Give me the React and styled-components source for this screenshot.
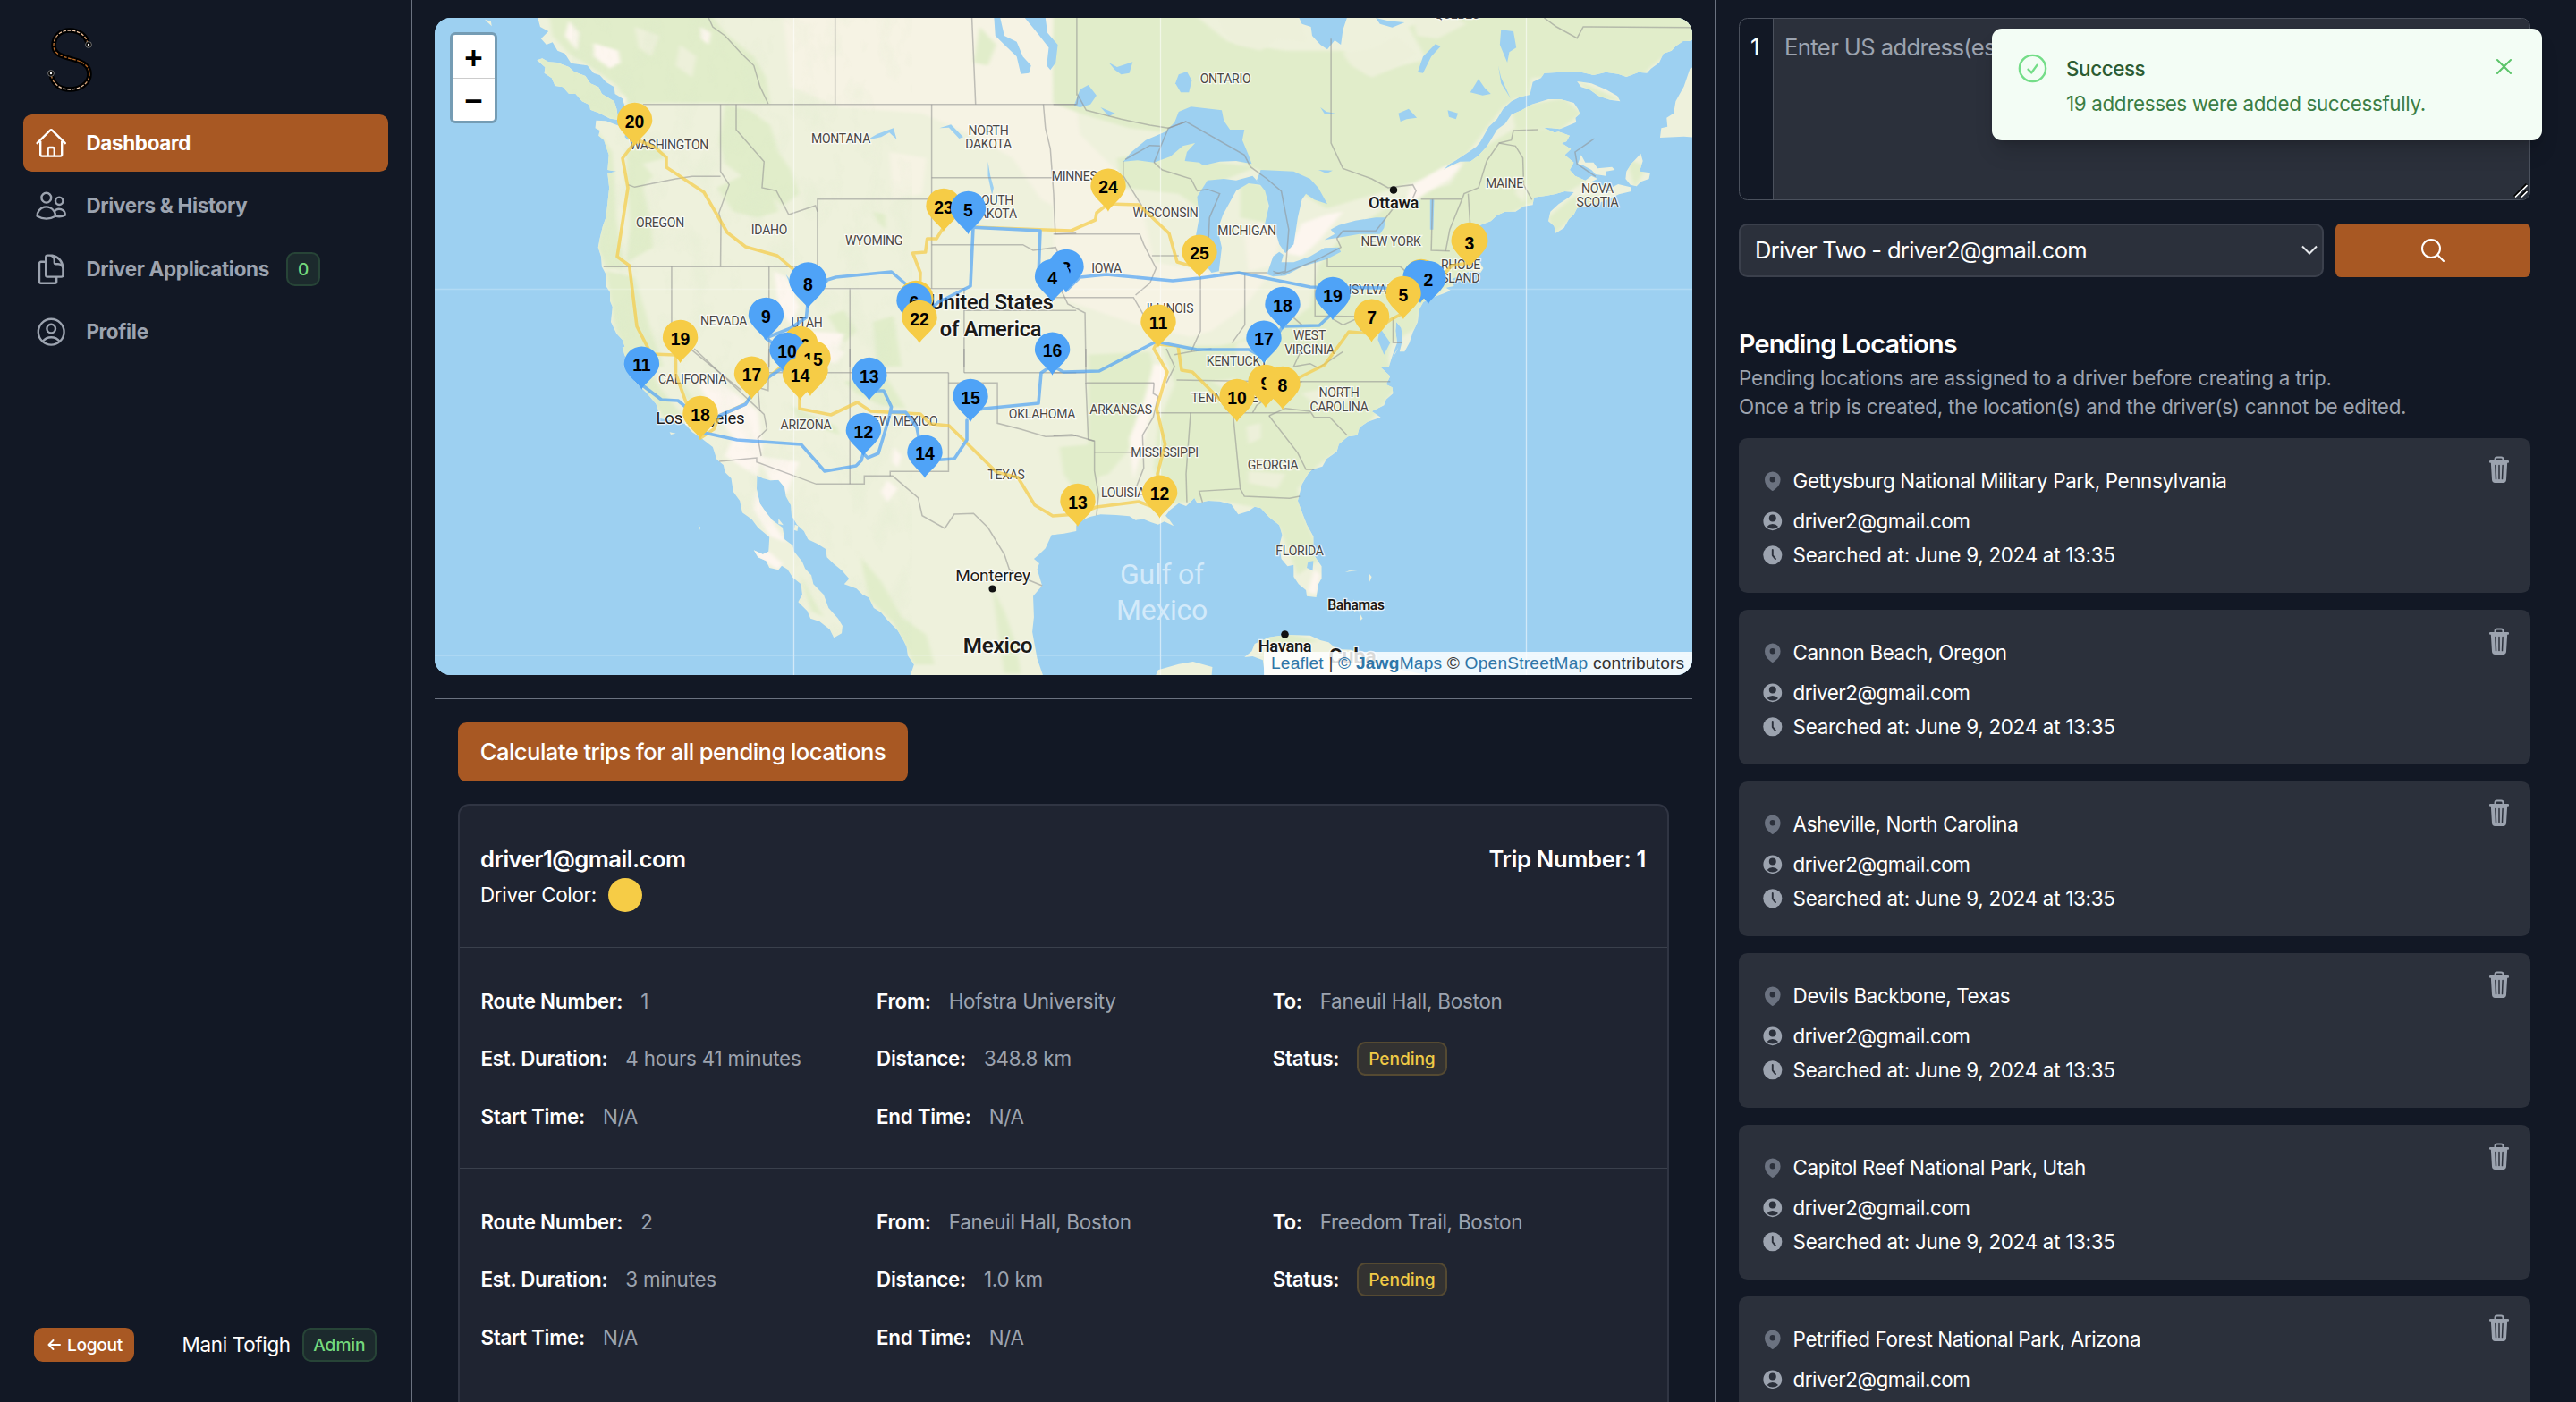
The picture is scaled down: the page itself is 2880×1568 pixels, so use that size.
import React from "react";
import styled, { createGlobalStyle } from "styled-components";
import {
  HiOutlineHome,
  HiOutlineUsers,
  HiOutlineDocumentDuplicate,
  HiOutlineUserCircle,
  HiOutlineCheckCircle,
  HiOutlineMagnifyingGlass,
  HiMapPin,
  HiUserCircle,
} from "react-icons/hi2";

const color = {
  page: "#121825",
  accent: "#a85823",
  line: "#6b7280",
  muted: "#9ca3af",
  panel: "#1f2431",
  card: "#2b303b",
  yellow: "#f6cc46",
  blue: "#4fa3f7",
};

const GlobalStyle = createGlobalStyle`
  *, *::before, *::after { box-sizing: border-box; }
  body {
    margin: 0;
    background: ${color.page};
    color: #fff;
    font-family: Inter, "Noto Sans", sans-serif;
    font-size: 22.4px;
    line-height: 32px;
    letter-spacing: -0.3px;
    overflow: hidden;
  }
`;

/* ---------- shell ---------- */

const Shell = styled.div`
  display: grid;
  grid-template-columns: 461px 1457px 1fr;
  height: 1568px;
  overflow: hidden;
  background: ${color.page};
`;

const Sidebar = styled.aside`
  display: flex;
  flex-direction: column;
  border-right: 1px solid ${color.line};
  padding: 26px;
`;

const LogoBox = styled.div`
  height: 102px;
  padding: 4px 0 0 24px;
`;

const Nav = styled.nav`
  display: flex;
  flex-direction: column;
  gap: 6.4px;
`;

const NavItem = styled.a`
  display: flex;
  align-items: center;
  height: 64px;
  padding: 0 12px;
  border-radius: 9.6px;
  font-weight: 650;
  letter-spacing: -0.3px;
  color: ${(p) => (p.$active ? "#fff" : color.muted)};
  background: ${(p) => (p.$active ? color.accent : "transparent")};

  svg {
    width: 38.4px;
    height: 38.4px;
    margin-right: 20px;
  }
`;

const tones = {
  green: { bg: "#1c2a2d", border: "#274437", text: "#74d97d" },
  yellow: { bg: "#333231", border: "#554a32", text: "#f0ca46" },
};

const Badge = styled.span`
  display: inline-flex;
  align-items: center;
  justify-content: center;
  height: 38px;
  min-width: 38px;
  padding: 0 ${(p) => p.$pad ?? 11}px;
  border: 2px solid ${(p) => tones[p.$tone].border};
  border-radius: 9.6px;
  background: ${(p) => tones[p.$tone].bg};
  color: ${(p) => tones[p.$tone].text};
  font-size: 19.2px;
  font-weight: 550;
  letter-spacing: -0.1px;
`;

const CountBadge = styled(Badge)`
  margin-left: 19px;
`;

const SidebarFoot = styled.div`
  display: flex;
  align-items: center;
  justify-content: space-between;
  margin-top: auto;
  padding: 0 13px 19px 12px;
`;

const Logout = styled.button`
  display: flex;
  align-items: center;
  gap: 7px;
  width: 112px;
  height: 38px;
  padding: 0 0 0 15px;
  border: 0;
  border-radius: 9.6px;
  background: ${color.accent};
  color: #fff;
  font: 550 19.2px Inter, sans-serif;
  letter-spacing: -0.35px;
`;

const Account = styled.div`
  display: flex;
  align-items: center;
  gap: 13px;
`;

/* ---------- centre column ---------- */

const Center = styled.main`
  display: flex;
  flex-direction: column;
  padding: 20px 25px 0 25px;
  border-right: 1px solid ${color.line};
  overflow: hidden;
`;

const MapFrame = styled.section`
  position: relative;
  flex: none;
  height: 735px;
  border-radius: 18px;
  overflow: hidden;
  background: #9dd0f1;

  > svg {
    display: block;
  }
`;

const ZoomControl = styled.div`
  position: absolute;
  left: 17px;
  top: 16px;
  width: 53px;
  height: 102px;
  display: flex;
  flex-direction: column;
  border: 3px solid rgba(0, 0, 0, 0.25);
  border-radius: 6px;
  background: #fff;
  background-clip: padding-box;
`;

const ZoomButton = styled.button`
  flex: 1;
  display: flex;
  align-items: center;
  justify-content: center;
  padding: 4px 0 0;
  border: 0;
  border-bottom: ${(p) => (p.$divided ? "1px solid #ccc" : "0")};
  background: transparent;
  color: #000;
  font: bold 35px "Liberation Sans", Arial, sans-serif;
`;

const Attribution = styled.div`
  position: absolute;
  right: 0;
  bottom: 0;
  height: 26px;
  width: 479px;
  padding: 0 8px;
  background: rgba(255, 255, 255, 0.84);
  color: #333;
  font: 19.2px/26px "Liberation Sans", Arial, sans-serif;
  letter-spacing: 0.18px;
  white-space: nowrap;

  a {
    color: #2f76a8;
  }
`;

const Trips = styled.section`
  flex: none;
  margin-top: 26px;
  padding: 26px 26px 0;
  border-top: 1px solid ${color.line};
`;

const CalculateButton = styled.button`
  display: block;
  width: 503px;
  height: 66px;
  padding: 0 0 2px;
  border: 0;
  border-radius: 9.6px;
  background: ${color.accent};
  color: #fff;
  font: 450 25.6px Inter, sans-serif;
  letter-spacing: -0.56px;
`;

const TripCard = styled.article`
  margin-top: 25px;
  width: 1354px;
  border: 2px solid #303543;
  border-bottom: 0;
  border-radius: 12.8px 12.8px 0 0;
  background: ${color.panel};
`;

const TripHead = styled.header`
  display: flex;
  justify-content: space-between;
  height: 158px;
  padding: 41px 24px 0 23px;
`;

const TripTitle = styled.h3`
  margin: 0;
  font-size: 25.6px;
  line-height: 38px;
  font-weight: 640;
  letter-spacing: ${(p) => p.$track ?? -0.5}px;
`;

const DriverColor = styled.div`
  display: flex;
  align-items: center;
  gap: 13px;
  height: 42px;
`;

const Dot = styled.span`
  width: 38.4px;
  height: 38.4px;
  border-radius: 50%;
  background: ${color.yellow};
`;

const Leg = styled.div`
  display: grid;
  grid-template-columns: repeat(3, 442.6px);
  grid-template-rows: 45px 43px 47px;
  row-gap: 20px;
  align-items: center;
  height: 246.8px;
  padding: 37.5px 0 0 23.5px;
  border-top: 1px solid #3a404c;
`;

const Field = styled.div`
  display: flex;
  align-items: center;
  gap: 20px;
`;

const Label = styled.span`
  font-weight: 570;
  letter-spacing: -0.28px;
`;

const Value = styled.span`
  color: ${color.muted};
  letter-spacing: -0.22px;
`;

/* ---------- right column ---------- */

const Side = styled.section`
  padding: 20px 51px 0 26px;
  overflow: hidden;
`;

const Editor = styled.div`
  position: relative;
  display: flex;
  height: 204px;
  border: 1px solid #4b515d;
  border-radius: 9.6px;
  overflow: hidden;
  font-size: 25.6px;
  line-height: 38px;
  letter-spacing: -0.6px;
`;

const Gutter = styled.div`
  width: 38px;
  padding: 13px 0 0 12px;
  border-right: 1px solid #4b515d;
`;

const EditorBody = styled.div`
  flex: 1;
  padding: 13px 12px 0;
  background: ${color.card};
  color: ${color.muted};
`;

const Grip = styled.svg`
  position: absolute;
  right: 2px;
  bottom: 2px;
`;

const Controls = styled.div`
  display: grid;
  grid-template-columns: 654px 218px;
  gap: 13px;
  margin-top: 26px;
  padding-bottom: 25px;
  border-bottom: 1px solid ${color.line};
`;

const Select = styled.div`
  display: flex;
  align-items: center;
  justify-content: space-between;
  height: 60px;
  padding: 0 5px 0 16px;
  border: 2px solid #3b404c;
  border-radius: 9.6px;
  background: ${color.card};
  font-size: 25.6px;
  font-weight: 430;
  letter-spacing: -0.72px;
`;

const SearchButton = styled.button`
  display: flex;
  align-items: center;
  justify-content: center;
  height: 60px;
  padding: 0;
  border: 0;
  border-radius: 6.4px;
  background: ${color.accent};
  color: #fff;
`;

const Heading = styled.h2`
  margin: 29px 0 0;
  font-size: 28.8px;
  line-height: 40px;
  font-weight: 640;
  letter-spacing: -0.8px;
`;

const Hint = styled.p`
  margin: 2px 0 19px;
  color: ${color.muted};
  letter-spacing: -0.24px;
`;

const List = styled.div`
  display: flex;
  flex-direction: column;
  gap: 19px;
`;

const LocationCard = styled.article`
  display: flex;
  justify-content: space-between;
  height: 173px;
  padding: 29.5px 24px 0 25px;
  border-radius: 9.6px;
  background: ${color.card};
`;

const Meta = styled.div`
  display: flex;
  align-items: center;
  gap: 10px;
  height: ${(p) => (p.$first ? 36 : 38.4)}px;
  margin-bottom: ${(p) => (p.$first ? 8 : 0)}px;
  color: #fff;
  font-weight: 440;
  letter-spacing: ${(p) => p.$track ?? -0.36}px;

  svg {
    flex: none;
    width: 25.6px;
    height: 25.6px;
    color: ${(p) => (p.$first ? "#6b7280" : "#9ca3af")};
  }
`;

const TrashIcon = styled.svg`
  margin-top: -10px;
`;

/* ---------- toast ---------- */

const Toast = styled.div`
  position: absolute;
  left: 2227px;
  top: 32px;
  width: 615px;
  height: 125px;
  display: flex;
  padding: 25px 29px 0 26px;
  border-radius: 11px;
  background: #f3fdf5;
  box-shadow: 0 16px 24px -5px rgba(0, 0, 0, 0.16), 0 6px 10px -6px rgba(0, 0, 0, 0.2);
`;

const ToastText = styled.div`
  flex: 1;
  margin: 4px 0 0 18px;
  display: flex;
  flex-direction: column;
  gap: 7px;
`;

const ToastTitle = styled.strong`
  font-weight: 550;
  color: #2c5c33;
  letter-spacing: -0.4px;
`;

const ToastMessage = styled.span`
  color: #3b7d44;
  letter-spacing: -0.34px;
`;

/* ---------- map data ---------- */

// The land is drawn in four quadrants, each with its own grid.
const quadrants = {
  nw: "translate(480 10) scale(.4592 .33333)",
  ne: "translate(1180 10) scale(.4592 .33333)",
  sw: "translate(480 390) scale(.4592 .33333)",
  se: "translate(1180 390) scale(.4592 .33333)",
};

const land = {
  nw: [
    "262,20 270,60 290,75 272,100 285,120 300,112 312,140 330,150 345,182 385,190 400,215 415,222 430,245 450,262 452,285 470,300 478,335 490,390 484,440 476,430 478,400 462,392 430,376 406,374 404,400 415,408 412,425 425,440 437,490 434,540 455,545 434,552 438,600 434,650 430,700 422,730 415,770 411,800 418,830 420,865 430,890 430,930 440,950 440,980 446,1000 442,1050 456,1090 470,1110 480,1150 474,1200 1575,1200 1575,20",
    "262,172 275,166 290,178 312,180 340,195 352,210 380,225 392,250 412,262 420,285 450,310 456,335 460,372 440,368 415,350 392,338 390,322 372,310 356,285 340,285 325,262 306,258 298,232 280,215 282,196",
    "135,35 150,42 152,58 142,45",
  ],
  ne: [
    "-5,20 1310,20 1560,20 1560,95 1545,108 1528,108 1510,125 1500,140 1480,150 1470,180 1450,200 1440,215 1420,212 1390,228 1370,218 1340,212 1310,222 1280,212 1230,212 1190,215 1182,232 1162,245 1155,288 1132,295 1110,310 1090,335 1075,370 1055,395 1045,420 1035,445 1025,462 1000,485 975,508 960,520 944,540 965,525 985,512 1010,512 1030,492 1050,462 1062,435 1075,405 1095,385 1110,355 1135,340 1160,320 1200,303 1230,303 1262,315 1272,335 1277,352 1266,365 1268,380 1242,395 1228,403 1208,400 1188,398 1215,415 1225,412 1252,425 1244,445 1232,450 1255,470 1240,490 1262,515 1252,540 1265,560 1290,575 1305,560 1320,570 1305,580 1330,590 1345,605 1370,588 1400,598 1402,612 1372,622 1345,640 1320,652 1295,660 1270,668 1262,690 1250,705 1238,735 1218,752 1214,728 1200,712 1205,680 1225,655 1250,632 1262,615 1240,612 1215,622 1190,628 1165,632 1162,658 1140,662 1120,680 1095,680 1075,692 1060,712 1040,722 1018,735 1002,752 1000,790 1010,830 1030,845 1042,870 1035,885 1012,880 1000,885 985,895 965,905 970,930 950,935 962,945 945,955 905,975 895,985 885,1010 882,1050 870,1085 862,1120 850,1150 838,1150 845,1110 842,1070 830,1050 828,1080 832,1120 820,1165 812,1200 -5,1200",
    "1270,243 1305,250 1340,270 1368,292 1375,310 1350,305 1322,292 1300,270 1280,262",
    "1400,590 1388,570 1390,545 1402,520 1425,485 1430,510 1422,545 1448,550 1445,570 1425,580 1415,595",
    "1280,490 1290,515 1310,515 1320,535 1355,530 1362,540 1340,545 1340,560 1315,555 1305,540 1285,525 1272,520",
    "1472,432 1475,400 1490,395 1488,365 1505,350 1510,310 1530,260 1545,200 1560,190 1560,432 1530,428",
  ],
  sw: [
    "470,-5 475,20 490,60 500,110 530,150 552,185 558,210 556,232 590,242 622,252 640,280 662,300 690,330 700,372 716,390 720,415 735,435 740,480 756,510 762,550 785,572 800,600 828,632 826,680 812,690 790,676 800,700 820,712 828,735 850,742 858,728 872,740 885,768 905,790 908,825 898,850 920,880 928,905 950,915 975,942 985,970 1004,955 1006,930 995,905 972,870 960,825 935,790 930,760 915,738 908,715 888,680 885,660 865,640 860,600 835,575 820,550 805,520 797,470 798,425 812,435 830,442 850,440 865,465 868,495 880,525 882,560 895,590 912,612 922,640 945,655 965,672 968,700 985,722 1005,745 1022,772 1010,790 1040,805 1055,825 1070,835 1082,870 1100,885 1115,910 1140,945 1155,980 1162,1000 1165,1030 1180,1060 1170,1100 1495,1100 1480,1040 1468,950 1472,900 1470,830 1492,795 1480,740 1485,720 1472,705 1485,690 1500,670 1515,625 1545,620 1575,612 1575,-5",
    "850,570 862,592 850,588",
    "890,590 898,595 896,612 888,608",
    "655,592 660,600 658,608",
    "585,280 600,284 588,288",
  ],
  se: [
    "-5,-5 -5,625 20,615 45,600 60,580 82,565 110,556 148,558 180,562 195,575 215,572 232,582 250,590 265,580 288,595 278,575 268,560 278,542 300,518 318,528 330,512 338,500 345,518 372,510 400,512 428,522 445,556 470,545 485,530 500,535 520,565 545,592 552,625 545,660 550,705 565,730 580,725 580,765 592,790 610,810 612,830 635,834 640,790 648,770 648,730 628,690 628,630 612,590 602,555 590,510 600,455 615,420 625,405 650,395 660,370 685,345 690,320 712,295 735,290 740,265 760,245 792,230 770,210 800,190 805,170 822,150 820,130 805,120 815,92 790,60 800,30 812,-5",
    "820,30 835,-5 828,15",
    "460,1035 478,1015 485,990 520,968 560,960 620,962 645,978 665,985 685,1008 720,1010 740,1030 775,1045 800,1060 850,1080 905,1095 510,1100 505,1045 480,1032",
    "243,1100 250,1078 300,1058 335,1050 382,1068 380,1100",
    "705,750 715,745 735,745 715,748",
    "762,752 770,765 765,782",
    "740,885 748,905 742,912",
    "725,840 735,870 728,885",
  ],
};

const woods = {
  nw: [
    "290,10 420,10 560,20 680,10 720,80 790,160 820,230 830,320 700,315 560,315 475,318 460,260 400,200 340,150 300,90",
    "262,160 360,195 460,310 465,380 380,340 290,240",
    "405,400 445,480 450,560 455,700 475,870 430,870 410,800 430,650 432,520",
    "480,470 560,460 575,500 520,520 545,560 520,600 540,720 545,800 480,850 490,720 480,580",
    "720,320 780,340 830,390 850,480 880,540 900,620 860,660 810,600 760,560 720,520 705,440",
    "1080,680 1110,690 1112,740 1095,720",
    "700,600 760,560 830,600 850,680 800,700 740,680",
    "1530,10 1575,10 1575,330 1528,300 1520,140",
    "430,880 500,900 540,1080 570,1200 480,1200 450,1050",
    "970,1030 1010,1010 1040,1080 1010,1120",
    "1080,1050 1130,1030 1150,1200 1090,1200",
    "1340,60 1380,120 1360,190 1325,180",
  ],
  ne: [
    "-5,10 330,10 420,110 560,140 700,140 760,220 900,170 1130,210 1140,280 1090,330 1050,400 1000,490 900,570 850,590 780,620 660,670 600,620 480,530 300,420 180,400 60,350 -5,315",
    "860,60 960,10 1570,10 1570,90 1480,160 1420,230 1160,230 1150,300 1000,290 900,160",
    "150,500 250,480 340,440 370,510 490,530 400,580 370,690 300,620 160,600",
    "1000,500 1120,400 1260,410 1260,500 1290,580 1240,620 1160,650 1070,710 1010,740 1000,790 1040,850 1000,890 950,940 890,1000 880,1070 820,1120 800,1210 330,1210 360,1150 480,1100 560,1060 620,1000 640,860 700,760 860,620 960,590",
    "1110,330 1240,300 1280,350 1230,405 1120,400",
    "450,570 520,600 520,720 450,700",
    "1260,630 1350,630 1250,710 1215,755 1200,700",
    "1270,240 1375,305 1320,300",
    "1390,500 1440,530 1410,600",
  ],
  sw: [
    "480,-10 520,30 560,130 620,230 570,230 520,130",
    "590,20 620,120 660,210 620,160",
    "1010,110 1110,90 1160,200 1100,190 1040,150",
    "1050,700 1100,780 1150,900 1210,960 1230,1060 1180,1060 1130,920 1070,840",
    "1370,800 1400,880 1430,1000 1440,1090 1400,1090 1385,950",
    "880,190 990,260 1000,290 900,240",
    "900,750 930,830 960,900 930,880",
  ],
  se: [
    "80,20 230,10 250,130 200,220 190,320 130,420 80,440 80,200",
    "260,-10 800,-10 830,130 740,290 640,390 590,470 605,560 650,700 590,760 545,600 480,530 400,510 270,520 240,400 250,250 290,120",
    "10,330 90,320 110,500 60,500 20,420",
    "480,975 565,955 640,980 560,1000",
  ],
};

const meadow = {
  ne: ["390,10 590,10 610,110 540,100 500,140 440,120 410,80", "700,150 780,130 830,90 880,150 820,200 770,230 720,190", "870,30 950,15 1000,50 930,100 880,90", "1120,560 1150,600 1140,650 1120,620", "440,1120 520,1090 500,1150 440,1170"],
  se: ["465,260 500,250 500,300 470,320", "380,110 440,100 420,140", "600,150 690,120 720,170 650,210", "470,410 560,420 540,470 470,450"],
  nw: ["500,60 560,90 540,160 510,130", "610,120 650,160 640,230 600,190"],
};

const pale = {
  nw: ["840,880 870,900 900,1000 880,1060 850,1000", "340,40 365,80 360,140 330,90", "400,115 460,140 465,180 440,200 400,160", "660,60 685,80 680,120 662,100", "900,1080 1010,1090 990,1170 920,1180", "465,280 480,300 478,325 468,310"],
  ne: ["850,640 870,590 945,530 990,520 960,570 900,620 880,640", "560,820 600,720 660,690 700,680 640,780 600,830"],
  sw: ["640,80 700,100 800,210 810,330 800,430 720,360 740,300 680,180", "800,360 900,380 880,450 870,490 830,440", "1115,440 1140,470 1115,515 1100,480", "800,650 860,720 850,742 800,700 790,680", "795,470 840,590 870,650 830,630 790,540", "1130,330 1150,360 1140,400 1128,380", "960,-10 1010,10 990,50 950,30"],
  se: ["240,50 270,60 270,120 230,230 190,440 180,300 210,200", "630,740 645,760 635,825 615,815"],
};

const prairie = {
  nw: ["860,10 1530,10 1520,320 1575,340 1575,700 1490,640 1420,500 1330,430 1200,350 1000,330 880,260", "1120,480 1210,500 1200,620 1130,640"],
  ne: ["-5,330 50,340 60,420 140,530 210,660 240,850 400,890 520,890 460,1000 380,1080 330,1100 200,1060 30,980 -5,900", "460,760 500,710 550,760 530,860 470,880"],
};

const water = {
  nw: [
    "1375,30 1390,30 1400,90 1430,110 1445,160 1465,190 1460,215 1440,218 1430,160 1400,120 1378,90",
    "1450,30 1500,30 1505,80 1530,120 1525,180 1512,205 1503,190 1508,130 1480,80",
    "868,890 885,920 895,945 880,930",
    "1065,440 1090,420 1130,400 1138,438 1120,415 1100,430",
    "1242,400 1270,388 1300,430 1290,435 1265,398",
    "1360,512 1366,560 1374,600 1370,625 1360,560",
  ],
  ne: [
    "590,20 712,20 700,70 695,120 680,105 662,136 645,120 625,90 622,60 600,50",
    "165,512 185,480 220,440 268,412 290,380 300,345 330,328 405,340 410,375 425,405 460,405 455,440 470,490 478,520 440,510 400,512 360,525 350,515 315,510 320,480 340,450 310,460 280,495 240,515 200,508",
    "370,575 345,630 350,700 342,760 350,830 380,885 398,880 405,800 395,740 408,690 440,610 470,585 500,590 480,560 440,575 410,570",
    "500,540 580,545 620,570 640,600 662,655 630,640 610,620 600,640 590,700 580,790 560,820 545,790 530,720 510,720 520,660 510,610 490,575",
    "515,890 530,830 545,815 555,825 550,850 580,850 620,830 655,802 690,800 695,815 660,840 600,865 560,895 530,898",
    "655,775 680,755 670,740 690,725 730,710 780,700 805,700 800,735 790,755 740,755 700,765",
    "300,220 320,210 332,240 325,280 305,280 292,250",
    "60,270 80,255 100,290 85,320 60,330 45,325",
    "130,180 150,195 188,178 180,215 160,220 145,205",
    "925,118 938,125 915,160 895,215 882,212 895,160",
    "1085,70 1115,75 1122,130 1105,145 1100,180 1082,120",
    "835,350 860,335 880,365 855,370 840,378",
    "955,340 980,350 975,370 958,362",
    "780,30 810,40 850,45 820,62 790,50",
    "1030,235 1045,265 1060,285 1040,290 1010,280",
    "640,540 675,542 660,552",
    "645,330 660,345 682,350 655,352",
    "1078,190 1085,230 1108,300 1085,250",
    "912,640 922,640 920,740 912,740",
    "110,330 145,350 130,360",
    "800,1090 790,1070 785,1110 800,1160 815,1120",
  ],
  se: ["615,715 628,712 626,745 612,735"],
};

const borders = {
  nw: [
    "520,320 1575,320", "680,30 690,60 720,90 760,150 790,190 805,260 825,318", "988,30 988,320", "1321,30 1330,320",
    "709,320 709,545 730,590 705,685 710,710 709,865", "747,320 747,405 815,512 810,600 845,610 875,690 940,660 945,680",
    "945,865 945,638 1223,638", "1223,320 1223,938", "1223,566 1517,566", "1495,320 1500,400 1512,470 1520,620 1524,755",
    "1223,791 1445,791 1470,810 1525,800 1545,870", "424,865 945,865", "945,865 945,938", "590,865 590,1090 760,1280", "827,865 827,1200",
    "915,938 1223,938", "1024,938 1024,1200", "1302,1012 1302,1200", "1302,1012 1575,1012", "1223,938 1302,938 1302,1012",
    "484,590 500,598 545,585 600,570 640,562 709,562", "1524,755 1575,752",
  ],
  ne: [
    "52,30 52,290", "-5,320 52,320 55,290 75,340 160,370 230,390 275,400 318,378 460,490 475,530 515,570 550,612 568,740 560,880 530,890",
    "318,378 275,400 240,515", "170,505 230,458 255,460", "671,100 671,450 700,535 770,570 810,600 870,590 878,610 870,635",
    "890,638 990,638 995,620 1030,600 1050,510 1080,450 1120,460 1138,500 1140,590 1160,640", "1080,450 1110,440 1115,408 1175,405",
    "1005,620 1010,730", "918,638 915,810 960,812", "990,638 960,740 950,812", "822,670 780,745 700,745 685,770 695,800 632,845 550,890 530,880",
    "632,845 632,1030 740,1032", "662,835 662,865 840,865 860,890", "165,510 165,560 210,660", "240,515 260,540 330,570 345,610 370,605 400,620 375,700 370,860",
    "-5,755 205,755 215,790 245,870 230,920 195,960", "235,828 300,828", "-5,968 190,968 220,1040 260,1110", "353,900 353,1080 330,1150",
    "461,890 461,1060 430,1120", "400,885 515,885", "1190,30 1220,60 1270,98 1285,60 1560,62", "1312,435 1265,480 1270,520 1315,562",
    "675,1040 700,1060 740,1035 745,1080", "822,1032 822,1120 845,1120", "550,1000 600,1060", "-5,900 20,960 30,990 72,1020 74,1200",
  ],
  sw: [
    "645,0 815,220 822,270 800,300 808,360", "706,378 797,366 797,380 942,454 1059,454 1059,427 1128,427 1190,500 1200,560 1255,603 1278,555 1325,553 1360,600 1400,690 1412,740",
    "827,0 825,140 800,130 805,210", "827,80 1264,80", "1024,0 1024,454", "1264,80 1264,412 1122,412 1122,427", "1302,0 1302,80", "1264,115 1383,115 1383,250 1440,270 1500,295 1575,292",
    "1412,740 1440,765 1492,795", "1302,80 1575,80",
  ],
  se: [
    "-5,80 72,80", "74,0 74,115 240,115", "74,115 80,305 95,310 95,410 105,490 100,560", "-5,292 40,288 95,310", "95,347 215,347",
    "240,115 238,150 250,160 238,230 212,290 215,400 195,470", "245,215 620,215", "295,105 520,110 815,110", "329,215 318,420 320,515", "432,215 450,470 350,478 358,515",
    "450,470 460,495 570,502 595,495", "520,225 590,350 610,405 630,405", "520,225 560,200 620,210 630,230 668,230 710,290", "480,215 490,190 530,150 600,110",
    "600,0 580,60 620,50 640,65 700,10", "270,0 290,60 270,115", "290,20 330,10 380,0",
  ],
};

const regions = [
  ["WASHINGTON", 748, 167], ["MONTANA", 940, 160], ["NORTH", 1105, 150.5], ["DAKOTA", 1105, 166], ["OREGON", 738, 254], ["IDAHO", 860, 262],
  ["WYOMING", 977, 274], ["SOUTH", 1111, 229], ["DAKOTA", 1111, 244], ["NEVADA", 809, 363.5], ["UTAH", 902, 366], ["MINNESOTA", 1214, 202],
  ["ONTARIO", 1370, 93], ["WISCONSIN", 1303, 242.5], ["MICHIGAN", 1394, 263], ["IOWA", 1237, 305], ["ILLINOIS", 1308, 350],
  ["NEW YORK", 1555, 275], ["MAINE", 1682, 210], ["NOVA", 1786, 215.5], ["SCOTIA", 1786, 231], ["RHODE", 1633, 301], ["ISLAND", 1631, 316],
  ["PENNSYLVANIA", 1524, 328.5], ["WEST", 1464, 380], ["VIRGINIA", 1464, 395.5], ["KENTUCKY", 1383, 409], ["CALIFORNIA", 774, 428.5],
  ["ARIZONA", 901, 480], ["NEW MEXICO", 1007, 476], ["OKLAHOMA", 1165, 468], ["TEXAS", 1125, 536], ["ARKANSAS", 1253, 462.5],
  ["TENNESSEE", 1369, 449.5], ["NORTH", 1497, 444], ["CAROLINA", 1497, 459.5], ["MISSISSIPPI", 1302, 511], ["GEORGIA", 1423, 525],
  ["LOUISIANA", 1265, 556], ["FLORIDA", 1453, 621], ["QUEBEC", 1629, 21],
];

const places = [
  { text: "United States", x: 1108.5, y: 345.5, size: 23.4, weight: 650 },
  { text: "of America", x: 1107.5, y: 375.5, size: 23.6, weight: 650 },
  { text: "Ottawa", x: 1558, y: 233, size: 18.2, weight: 650 },
  { text: "Los Angeles", x: 783, y: 473.5, size: 18.6, weight: 400 },
  { text: "Monterrey", x: 1110, y: 649.5, size: 19, weight: 400 },
  { text: "Mexico", x: 1115.5, y: 730, size: 24.2, weight: 650 },
  { text: "Bahamas", x: 1516, y: 682, size: 15.6, weight: 650 },
  { text: "Havana", x: 1436.5, y: 729, size: 18.2, weight: 650 },
  { text: "Cuba", x: 1512, y: 742, size: 23.4, weight: 650 },
];

const yellowRoutes = [
  "709,160 696,177 702,210 690,287 703.6,297 712,365 728,396 755.5,397 755.5,418 767,450 783,483",
  "709,160 716.5,158 732.5,165 745,176 745,187 787,215 813,260 833.6,276 869,286 889,303 903,340",
  "783,490 798,480 804,465 833,452 840,443 859,422 880,405",
  "894,430 894,457 929,464 958.5,450 973.6,460 1029,463 1040,474 1061,476 1114,528 1138,534 1157,565 1177,577 1205,575 1226,567 1273,561 1297,570",
  "1297,575 1294,530 1302.6,497 1293,457 1305,416 1290,390 1295,380",
  "1295,385 1317,387 1321,414 1333,416 1364,447 1383,468",
  "1434,440 1453,422 1481,408 1508,371 1533,373 1554,358 1569,350 1597,325 1616,305 1623,297 1643,294",
  "1055,254 1047,267 1036.6,267 1034.7,282 1020.5,283 1029,305 1028,340",
  "1088,254 1169,257 1197.5,258 1224.6,246 1226,238 1239,228 1273,229 1307,261 1316,293 1341,300",
];

const blueRoutes = [
  "1192,325 1207.5,310 1237,307 1311,314 1341,311 1385,305 1465,321 1547,322 1597,330",
  "1082,254 1163,258 1161,310 1176,330",
  "1088,254 1085,320 1049,338 1022,362",
  "1022,330 1013,318 996.6,304 934.6,310 925,313 903,340",
  "903,340 901.5,355 884,367 856,378 880,395",
  "880,416 872.6,413 859,422 839.5,443 833.6,452 804,465 783,480",
  "717,430 739.5,447 758,448 775,462 783,483 824,492 895.6,497 922,527 957,521 963,515 965,507 970,512 982,507 994,467 996.6,455 988,437 972,437",
  "996.6,461 1012.6,461 1025,478 1034,525",
  "1034,515 1053,514 1067,513 1081,492 1081,470",
  "1085,460 1100,457 1161,451 1164,417 1176,409 1189,416 1229,415 1292.5,382 1338,391 1396,391 1413,400",
  "1413,400 1434,365 1475,364 1490,350",
];

const markers = [
  ["", 1589, 338, "yellow"], ["20", 709.6, 163, "yellow"], ["23", 1055, 259, "yellow"], ["5", 1082.5, 262, "blue"], ["24", 1239, 236.7, "yellow"],
  ["3", 1643, 299, "yellow", 1.04], ["25", 1341, 310.7, "yellow"], ["3", 1192, 327, "blue"], ["4", 1176.6, 338, "blue"],
  ["", 1588, 339, "blue"], ["2", 1597, 340, "blue"], ["8", 903.4, 345, "blue", 1.07], ["5", 1569, 357, "yellow"], ["", 1024, 362, "yellow"], ["6", 1022, 365, "blue"],
  ["22", 1028, 384, "yellow"], ["19", 1490, 358, "blue"], ["18", 1434, 369, "blue"], ["9", 856.5, 381, "blue"], ["7", 1533.6, 382.7, "yellow"],
  ["11", 1295, 388.7, "yellow"], ["19", 760.6, 406, "yellow"], ["17", 1413, 406.7, "blue"], ["16", 894.6, 413, "yellow"], ["10", 880, 420, "blue"],
  ["16", 1176.6, 419.7, "blue"], ["", 906, 443, "yellow"], ["15", 909, 429, "yellow"], ["11", 717.4, 435.7, "blue"], ["17", 840.5, 446.7, "yellow"],
  ["14", 894.6, 447.7, "yellow"], ["13", 971.8, 448, "blue"], ["9", 1415, 456, "yellow"], ["8", 1434, 458, "yellow"], ["10", 1383, 472, "yellow"],
  ["15", 1085, 472, "blue"], ["18", 783, 491, "yellow"], ["12", 965.4, 510, "blue"], ["14", 1034, 534.7, "blue"], ["12", 1296.6, 579.7, "yellow"],
  ["13", 1205, 589, "yellow"],
];

const MapText = styled.text`
  font-family: Roboto, "Open Sans", sans-serif;
  font-size: ${(p) => p.$size ?? 14}px;
  font-weight: ${(p) => p.$weight ?? 450};
  letter-spacing: -0.25px;
  text-anchor: middle;
  fill: ${(p) => (p.$sea ? "#d3eafa" : p.$size ? "#1c1a18" : "#4a4745")};
  stroke: ${(p) => (p.$sea ? "none" : "rgba(255,255,255,.75)")};
  stroke-width: 2.5px;
  paint-order: stroke;
`;

const MarkerText = styled.text`
  font: bold 19.4px "Liberation Sans", Arial, sans-serif;
  letter-spacing: 0;
  text-anchor: middle;
  fill: #000;
`;

const Layer = ({ shapes, fill, opacity = 1, filter }) =>
  Object.entries(shapes).map(([q, list]) => (
    <g key={q} transform={quadrants[q]} fill={fill} opacity={opacity} filter={filter}>
      {list.map((points, i) => <polygon key={i} points={points} />)}
    </g>
  ));

const LandClip = () => (
  <clipPath id="land">
    {Object.entries(land).flatMap(([q, list]) =>
      list.map((points, i) => <polygon key={q + i} points={points} transform={quadrants[q]} />)
    )}
  </clipPath>
);

const Marker = ({ label, x, y, tone, scale = 1 }) => (
  <g transform={`translate(${x} ${y})`}>
    <path
      transform={`scale(${scale})`}
      d="M0 0C-3-7-19.7-17-19.7-28.6A19.7 19.7 0 0 1 19.7-28.6C19.7-17 3-7 0 0Z"
      fill={color[tone]}
    />
    {label && <MarkerText y={-20.5}>{label}</MarkerText>}
  </g>
);

const RouteMap = () => (
  <svg width="1406" height="735" viewBox="486 20 1406 735">
    <defs>
      <LandClip />
      <filter id="soft"><feGaussianBlur stdDeviation="5" /></filter>
      <filter id="relief" x="0" y="0" width="100%" height="100%">
        <feTurbulence type="fractalNoise" baseFrequency=".035 .02" numOctaves="4" seed="7" />
        <feColorMatrix values="0 0 0 0 .72  0 0 0 0 .83  0 0 0 0 .60  2.4 0 0 0 -1.2" />
      </filter>
    </defs>
    <rect x="486" y="20" width="1406" height="735" fill="#9dd0f1" />
    <Layer shapes={land} fill="#eef1dc" />
    <g clipPath="url(#land)">
      <Layer shapes={prairie} fill="#f6f3e4" filter="url(#soft)" />
      <Layer shapes={woods} fill="#e1edca" filter="url(#soft)" />
      <Layer shapes={meadow} fill="#edf0da" filter="url(#soft)" />
      <Layer shapes={pale} fill="#fdf6ef" filter="url(#soft)" />
      <rect x="640" y="20" width="380" height="735" filter="url(#relief)" opacity=".3" />
    </g>
    <Layer shapes={water} fill="#9dd0f1" />
    {Object.entries(borders).map(([q, list]) => (
      <g key={q} transform={quadrants[q]} fill="none" stroke="#8f8f8f" strokeOpacity=".55">
        {list.map((points, i) => (
          <polyline key={i} points={points} strokeWidth="1.5" vectorEffect="non-scaling-stroke" />
        ))}
      </g>
    ))}
    <g stroke="#fff" strokeWidth="1.3" opacity=".55">
      <path d="M887.5 20V755M1297.5 20V755M1706.5 20V755" />
      <path d="M486 323.5H1892M486 733H1892" opacity=".4" />
    </g>
    {regions.map(([text, x, y], i) => <MapText key={i} x={x} y={y}>{text}</MapText>)}
    {places.map((p) => <MapText key={p.text} x={p.x} y={p.y} $size={p.size} $weight={p.weight}>{p.text}</MapText>)}
    <MapText x="1299" y="653" $size={32} $sea>Gulf of</MapText>
    <MapText x="1299" y="693" $size={32} $sea>Mexico</MapText>
    <g fill="#111">
      <circle cx="1558" cy="212.5" r="4.3" />
      <circle cx="1109.5" cy="658.5" r="4" />
      <circle cx="1436.5" cy="709.5" r="4.3" />
    </g>
    <g fill="none" strokeWidth="3.6" strokeLinejoin="round" strokeLinecap="round" opacity=".7">
      {yellowRoutes.map((r) => <polyline key={r} points={r} stroke={color.yellow} />)}
      {blueRoutes.map((r) => <polyline key={r} points={r} stroke={color.blue} />)}
    </g>
    {markers.map(([label, x, y, tone, scale], i) => (
      <Marker key={i} label={label} x={x} y={y} tone={tone} scale={scale} />
    ))}
  </svg>
);

/* ---------- small drawings ---------- */

const Logo = () => {
  const s = "M98 49C97 40 88 34 78 34C67 34 60 41 60 51C60 71 100 60 100 83C100 93 90 100 78 100C67 100 59 94 57 83";
  return (
    <svg width="54" height="74" viewBox="50 30 54 74" fill="none">
      <defs>
        <linearGradient id="thread" x1="0" y1="34" x2="0" y2="100" gradientUnits="userSpaceOnUse">
          <stop offset="0" stopColor="#f0cdb2" />
          <stop offset=".25" stopColor="#c0702f" />
          <stop offset=".75" stopColor="#b8651f" />
          <stop offset="1" stopColor="#ecd0ba" />
        </linearGradient>
      </defs>
      <path d={s} stroke="#000" strokeWidth="5.6" />
      <path d={s} stroke="url(#thread)" strokeWidth="1.3" strokeDasharray="3.6 1.6" />
      {[[99, 50], [57, 82]].map(([x, y]) => (
        <g key={x}>
          <circle cx={x} cy={y} r="3.4" fill="#000" stroke="#8b8b8b" strokeWidth=".8" />
          <circle cx={x} cy={y} r="1.2" fill="#fff" />
        </g>
      ))}
    </svg>
  );
};

const ClockIcon = () => (
  <svg viewBox="0 0 24 24">
    <circle cx="12" cy="12" r="9.9" fill="currentColor" />
    <path d="M12 6.6V12.3L15 16" fill="none" stroke={color.card} strokeWidth="1.8" strokeLinecap="round" strokeLinejoin="round" />
  </svg>
);

const Trash = () => (
  <TrashIcon width="22" height="30" viewBox="0 0 22 30">
    <path d="M6.5 6V3.8Q6.5 1.4 8.8 1.4H13.2Q15.5 1.4 15.5 3.8V6" fill="none" stroke={color.muted} strokeWidth="2" />
    <path d="M1 6.4H21" stroke={color.muted} strokeWidth="2.6" strokeLinecap="round" />
    <path d="M1.8 7H20.2L19 26.6Q18.8 30 15.6 30H6.4Q3.2 30 3 26.6Z" fill={color.muted} />
    <path d="M6.9 10.6L7.5 25.6M11 10.6V25.6M15.1 10.6L14.5 25.6" stroke={color.card} strokeWidth="1.5" strokeLinecap="round" />
  </TrashIcon>
);

const legs = [
  { n: 1, from: "Hofstra University", to: "Faneuil Hall, Boston", duration: "4 hours 41 minutes", distance: "348.8 km" },
  { n: 2, from: "Faneuil Hall, Boston", to: "Freedom Trail, Boston", duration: "3 minutes", distance: "1.0 km" },
];

const locations = [
  "Gettysburg National Military Park, Pennsylvania",
  "Cannon Beach, Oregon",
  "Asheville, North Carolina",
  "Devils Backbone, Texas",
  "Capitol Reef National Park, Utah",
  "Petrified Forest National Park, Arizona",
];

const Entry = ({ label, children }) => (
  <Field>
    <Label>{label}:</Label>
    {children}
  </Field>
);

export default function App() {
  return (
    <>
      <GlobalStyle />
      <Shell>
        <Sidebar>
          <LogoBox><Logo /></LogoBox>
          <Nav>
            <NavItem $active><HiOutlineHome />Dashboard</NavItem>
            <NavItem><HiOutlineUsers />Drivers &amp; History</NavItem>
            <NavItem>
              <HiOutlineDocumentDuplicate />Driver Applications
              <CountBadge $tone="green">0</CountBadge>
            </NavItem>
            <NavItem><HiOutlineUserCircle />Profile</NavItem>
          </Nav>
          <SidebarFoot>
            <Logout>
              <svg width="15" height="14" viewBox="0 0 15 14" fill="none" stroke="#fff" strokeWidth="2" strokeLinecap="round" strokeLinejoin="round">
                <path d="M14 7H1.5M6.5 2L1.5 7L6.5 12" />
              </svg>
              Logout
            </Logout>
            <Account>
              <span>Mani Tofigh</span>
              <Badge $tone="green" $pad={10.5}>Admin</Badge>
            </Account>
          </SidebarFoot>
        </Sidebar>

        <Center>
          <MapFrame>
            <RouteMap />
            <ZoomControl>
              <ZoomButton $divided>+</ZoomButton>
              <ZoomButton>−</ZoomButton>
            </ZoomControl>
            <Attribution>
              <a>Leaflet</a> | <a>© <b>Jawg</b>Maps</a> © <a>OpenStreetMap</a> contributors
            </Attribution>
          </MapFrame>
          <Trips>
            <CalculateButton>Calculate trips for all pending locations</CalculateButton>
            <TripCard>
              <TripHead>
                <div>
                  <TripTitle>driver1@gmail.com</TripTitle>
                  <DriverColor>Driver Color:<Dot /></DriverColor>
                </div>
                <TripTitle $track={-0.3}>Trip Number: 1</TripTitle>
              </TripHead>
              {legs.map((leg) => (
                <Leg key={leg.n}>
                  <Entry label="Route Number"><Value>{leg.n}</Value></Entry>
                  <Entry label="From"><Value>{leg.from}</Value></Entry>
                  <Entry label="To"><Value>{leg.to}</Value></Entry>
                  <Entry label="Est. Duration"><Value>{leg.duration}</Value></Entry>
                  <Entry label="Distance"><Value>{leg.distance}</Value></Entry>
                  <Entry label="Status"><Badge $tone="yellow">Pending</Badge></Entry>
                  <Entry label="Start Time"><Value>N/A</Value></Entry>
                  <Entry label="End Time"><Value>N/A</Value></Entry>
                </Leg>
              ))}
              <Leg />
            </TripCard>
          </Trips>
        </Center>

        <Side>
          <Editor>
            <Gutter>1</Gutter>
            <EditorBody>Enter US address(es)</EditorBody>
            <Grip width="16" height="16" viewBox="0 0 16 16" fill="none">
              <path d="M1 15L15 1M8 15L15 8" stroke="#000" strokeWidth="3" />
              <path d="M2 15.5L15.5 2M9 15.5L15.5 9" stroke="#fff" strokeWidth="1.6" />
            </Grip>
          </Editor>
          <Controls>
            <Select>
              Driver Two - driver2@gmail.com
              <svg width="18" height="12" viewBox="0 0 18 12" fill="none" stroke="#e5e7eb" strokeWidth="2">
                <path d="M1 1.5L9 9.5L17 1.5" />
              </svg>
            </Select>
            <SearchButton><HiOutlineMagnifyingGlass size={32} /></SearchButton>
          </Controls>
          <Heading>Pending Locations</Heading>
          <Hint>
            Pending locations are assigned to a driver before creating a trip.
            <br />
            Once a trip is created, the location(s) and the driver(s) cannot be edited.
          </Hint>
          <List>
            {locations.map((name) => (
              <LocationCard key={name}>
                <div>
                  <Meta $first><HiMapPin />{name}</Meta>
                  <Meta $track={-0.48}><HiUserCircle />driver2@gmail.com</Meta>
                  <Meta $track={-0.28}><ClockIcon />Searched at: June 9, 2024 at 13:35</Meta>
                </div>
                <Trash />
              </LocationCard>
            ))}
          </List>
        </Side>
      </Shell>
      <Toast>
        <HiOutlineCheckCircle size={39} color="#74dd88" />
        <ToastText>
          <ToastTitle>Success</ToastTitle>
          <ToastMessage>19 addresses were added successfully.</ToastMessage>
        </ToastText>
        <svg width="26" height="34" viewBox="-4 -9 26 34" stroke="#5cc46a" strokeWidth="2" strokeLinecap="round">
          <path d="M1 1L16 16M16 1L1 16" />
        </svg>
      </Toast>
    </>
  );
}
